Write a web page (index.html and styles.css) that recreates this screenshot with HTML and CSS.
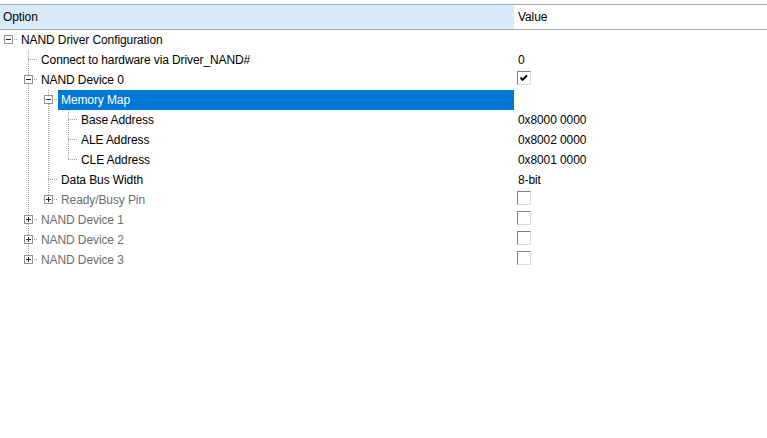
FILE: index.html
```html
<!DOCTYPE html>
<html>
<head>
<meta charset="utf-8">
<link rel="stylesheet" href="styles.css">
</head>
<body>
<div class="grid">
  <div class="head">
    <div class="h-opt">Option</div>
    <div class="h-val">Value</div>
  </div>

  <div class="row">
    <div class="opt"><span class="g last none"><span class="box minus"></span></span><span class="label">NAND Driver Configuration</span></div>
    <div class="val"></div>
  </div>
  <div class="row">
    <div class="opt"><span class="g"></span><span class="g last tee"></span><span class="label">Connect to hardware via Driver_NAND#</span></div>
    <div class="val">0</div>
  </div>
  <div class="row">
    <div class="opt"><span class="g"></span><span class="g last tee"><span class="box minus"></span></span><span class="label">NAND Device 0</span></div>
    <div class="val"><span class="chk on"><svg width="12" height="12" viewBox="0 0 12 12"><path d="M2.5 5.5 L4.6 7.8 L9 3.4" fill="none" stroke="#000" stroke-width="2"/></svg></span></div>
  </div>
  <div class="row">
    <div class="opt"><span class="g"></span><span class="g cont"></span><span class="g last tee"><span class="box minus"></span></span><span class="label sel">Memory Map</span></div>
    <div class="val"></div>
  </div>
  <div class="row">
    <div class="opt"><span class="g"></span><span class="g cont"></span><span class="g cont"></span><span class="g last tee"></span><span class="label">Base Address</span></div>
    <div class="val">0x8000 0000</div>
  </div>
  <div class="row">
    <div class="opt"><span class="g"></span><span class="g cont"></span><span class="g cont"></span><span class="g last tee"></span><span class="label">ALE Address</span></div>
    <div class="val">0x8002 0000</div>
  </div>
  <div class="row">
    <div class="opt"><span class="g"></span><span class="g cont"></span><span class="g cont"></span><span class="g last elbow"></span><span class="label">CLE Address</span></div>
    <div class="val">0x8001 0000</div>
  </div>
  <div class="row">
    <div class="opt"><span class="g"></span><span class="g cont"></span><span class="g last tee"></span><span class="label">Data Bus Width</span></div>
    <div class="val">8-bit</div>
  </div>
  <div class="row">
    <div class="opt"><span class="g"></span><span class="g cont"></span><span class="g last elbow"><span class="box plus"></span></span><span class="label dis">Ready/Busy Pin</span></div>
    <div class="val"><span class="chk"></span></div>
  </div>
  <div class="row">
    <div class="opt"><span class="g"></span><span class="g last tee"><span class="box plus"></span></span><span class="label dis">NAND Device 1</span></div>
    <div class="val"><span class="chk"></span></div>
  </div>
  <div class="row">
    <div class="opt"><span class="g"></span><span class="g last tee"><span class="box plus"></span></span><span class="label dis">NAND Device 2</span></div>
    <div class="val"><span class="chk"></span></div>
  </div>
  <div class="row">
    <div class="opt"><span class="g"></span><span class="g last elbow"><span class="box plus"></span></span><span class="label dis">NAND Device 3</span></div>
    <div class="val"><span class="chk"></span></div>
  </div>
</div>
</body>
</html>
```

FILE: styles.css
```css
html, body {
  margin: 0;
  padding: 0;
  background: #ffffff;
}

body {
  font-family: "Liberation Sans", Arial, sans-serif;
  font-size: 12px;
  letter-spacing: -0.1px;
  color: #000000;
  width: 767px;
  height: 438px;
  overflow: hidden;
}

.grid {
  padding-top: 4px;
}

.head {
  display: grid;
  grid-template-columns: 514px 1fr;
  height: 24px;
  box-sizing: content-box;
  border-top: 1px solid #a9a9a9;
  border-bottom: 1px solid #a9a9a9;
}

.h-opt {
  background: #d9ebf9;
  padding: 1px 0 0 3px;
  line-height: 23px;
}

.h-val {
  padding: 1px 0 0 4px;
  line-height: 23px;
}

.row {
  display: grid;
  grid-template-columns: 514px 1fr;
  height: 20px;
}

.opt {
  display: flex;
  height: 20px;
}

.g {
  flex: 0 0 20px;
  height: 20px;
  display: flex;
  align-items: flex-start;
}

.g.last {
  flex-basis: 18px;
}

.cont {
  background: repeating-linear-gradient(to bottom, #a0a0a0 0 1px, transparent 1px 2px) 8px 0 / 1px 100% no-repeat;
}

.tee {
  background:
    repeating-linear-gradient(to bottom, #a0a0a0 0 1px, transparent 1px 2px) 8px 0 / 1px 100% no-repeat,
    repeating-linear-gradient(to right, #a0a0a0 0 1px, transparent 1px 2px) 8px 9px / 10px 1px no-repeat;
}

.elbow {
  background:
    repeating-linear-gradient(to bottom, #a0a0a0 0 1px, transparent 1px 2px) 8px 0 / 1px 10px no-repeat,
    repeating-linear-gradient(to right, #a0a0a0 0 1px, transparent 1px 2px) 8px 9px / 10px 1px no-repeat;
}

.none {
  background: repeating-linear-gradient(to right, #a0a0a0 0 1px, transparent 1px 2px) 8px 9px / 10px 1px no-repeat;
}

.box {
  width: 9px;
  height: 9px;
  box-sizing: border-box;
  margin: 5px 0 0 4px;
  border: 1px solid #919191;
  background-color: #ffffff;
  background-repeat: no-repeat;
}

.box.minus {
  background-image: linear-gradient(#2b2b2b, #2b2b2b);
  background-position: 1px 3px;
  background-size: 5px 1px;
}

.box.plus {
  background-image: linear-gradient(#2b2b2b, #2b2b2b), linear-gradient(#2b2b2b, #2b2b2b);
  background-position: 1px 3px, 3px 1px;
  background-size: 5px 1px, 1px 5px;
}

.label {
  flex: 1;
  padding-left: 3px;
  line-height: 20px;
  white-space: nowrap;
}

.label.sel {
  background: #0078d7;
  color: #ffffff;
}

.label.dis {
  color: #6d6d6d;
}

.val {
  padding-left: 4px;
  line-height: 20px;
  white-space: nowrap;
}

.chk {
  display: flex;
  align-items: center;
  justify-content: center;
  width: 14px;
  height: 14px;
  box-sizing: border-box;
  margin: 1px 0 0 -1px;
  border-top: 1px solid #808080;
  border-left: 1px solid #808080;
  border-right: 1px solid #dcdcdc;
  border-bottom: 1px solid #dcdcdc;
  background: #ffffff;
}
```
